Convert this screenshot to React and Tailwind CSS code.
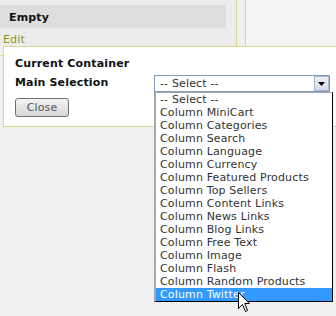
import React from "react";

const items = [
  "-- Select --",
  "Column MiniCart",
  "Column Categories",
  "Column Search",
  "Column Language",
  "Column Currency",
  "Column Featured Products",
  "Column Top Sellers",
  "Column Content Links",
  "Column News Links",
  "Column Blog Links",
  "Column Free Text",
  "Column Image",
  "Column Flash",
  "Column Random Products",
  "Column Twitter",
];

export default function App() {
  return (
    <div
      className="w-[336px] h-[316px] overflow-hidden bg-[#f0f0f0] text-[11px] leading-[13px] tracking-[0.15px] text-[#222]"
      style={{ fontFamily: '"DejaVu Sans", Verdana, sans-serif' }}
    >
      {/* top section */}
      <div className="flex h-[46px]">
        <div className="w-[236px] shrink-0 bg-[#ececec] pt-[5px]">
          <div className="w-[226px] h-[23px] bg-[#dcdddc] pl-[9px] pt-[6px] font-bold text-[#111]">
            Empty
          </div>
          <div className="pl-[3px] pt-[5px] text-[#8f9a1f]">Edit</div>
        </div>
        <div className="w-[10px] shrink-0 bg-[#efefef] border-x border-[#d8d890]"></div>
        <div className="flex-1 bg-[#f5f5f5]"></div>
      </div>
      {/* dialog row */}
      <div className="flex">
        <div className="w-[3px] shrink-0 h-[1px] mt-[9px] bg-[#d8d890]"></div>
        <div className="w-[340px] shrink-0 bg-white border border-[#d8d890] pl-[11px] pt-[10px] pb-[9px]">
          <div className="font-bold text-[#111] h-[13px]">Current Container</div>
          <div className="flex mt-[5px] h-[17px]">
            <div className="w-[139px] shrink-0 font-bold text-[#111] pt-[1px]">Main Selection</div>
            <div className="relative">
              <div className="flex w-[176px] h-[17px] border border-[#7f9db9] bg-white">
                <div className="flex-1 pl-[5px] pt-[1px] text-[#333]">-- Select --</div>
                <div className="w-[15px] h-[15px] border border-[#a8b8cf] bg-gradient-to-b from-[#eef2f8] to-[#d2dbe8] flex items-center justify-center">
                  <svg width="7" height="4" viewBox="0 0 7 4">
                    <path d="M0 0 L7 0 L3.5 4 Z" fill="#000" />
                  </svg>
                </div>
              </div>
              {/* dropdown list */}
              <div className="absolute left-0 top-[17px] w-[179px] bg-white border-l-2 border-t border-l-[#a8a8a8] border-t-[#a8a8a8] border-r border-b border-r-black border-b-black z-10">
                {items.map((it, i) => (
                  <div
                    key={it}
                    className={
                      "h-[13px] pl-[4px] whitespace-nowrap " +
                      (i === items.length - 1 ? "bg-[#3399ff] text-white" : "text-[#333]")
                    }
                  >
                    {it}
                  </div>
                ))}
              </div>
              {/* cursor */}
              <svg
                className="absolute z-20 left-[84px] top-[217px]"
                width="13"
                height="21"
                viewBox="0 0 13 21"
              >
                <path
                  d="M0.5 0.5 L0.5 16.5 L4.5 12.5 L7.5 19.5 L9.5 18.5 L6.8 11.5 L11.5 11.5 Z"
                  fill="#fff"
                  stroke="#000"
                  strokeWidth="1"
                />
              </svg>
            </div>
          </div>
          <div className="mt-[6px]">
            <button className="w-[54px] h-[19px] border border-[#707070] rounded-[3px] bg-gradient-to-b from-[#f4f4f4] to-[#d6d6d6] text-[#555] text-[11px] leading-[15px] flex items-center justify-center">
              Close
            </button>
          </div>
        </div>
      </div>
    </div>
  );
}
